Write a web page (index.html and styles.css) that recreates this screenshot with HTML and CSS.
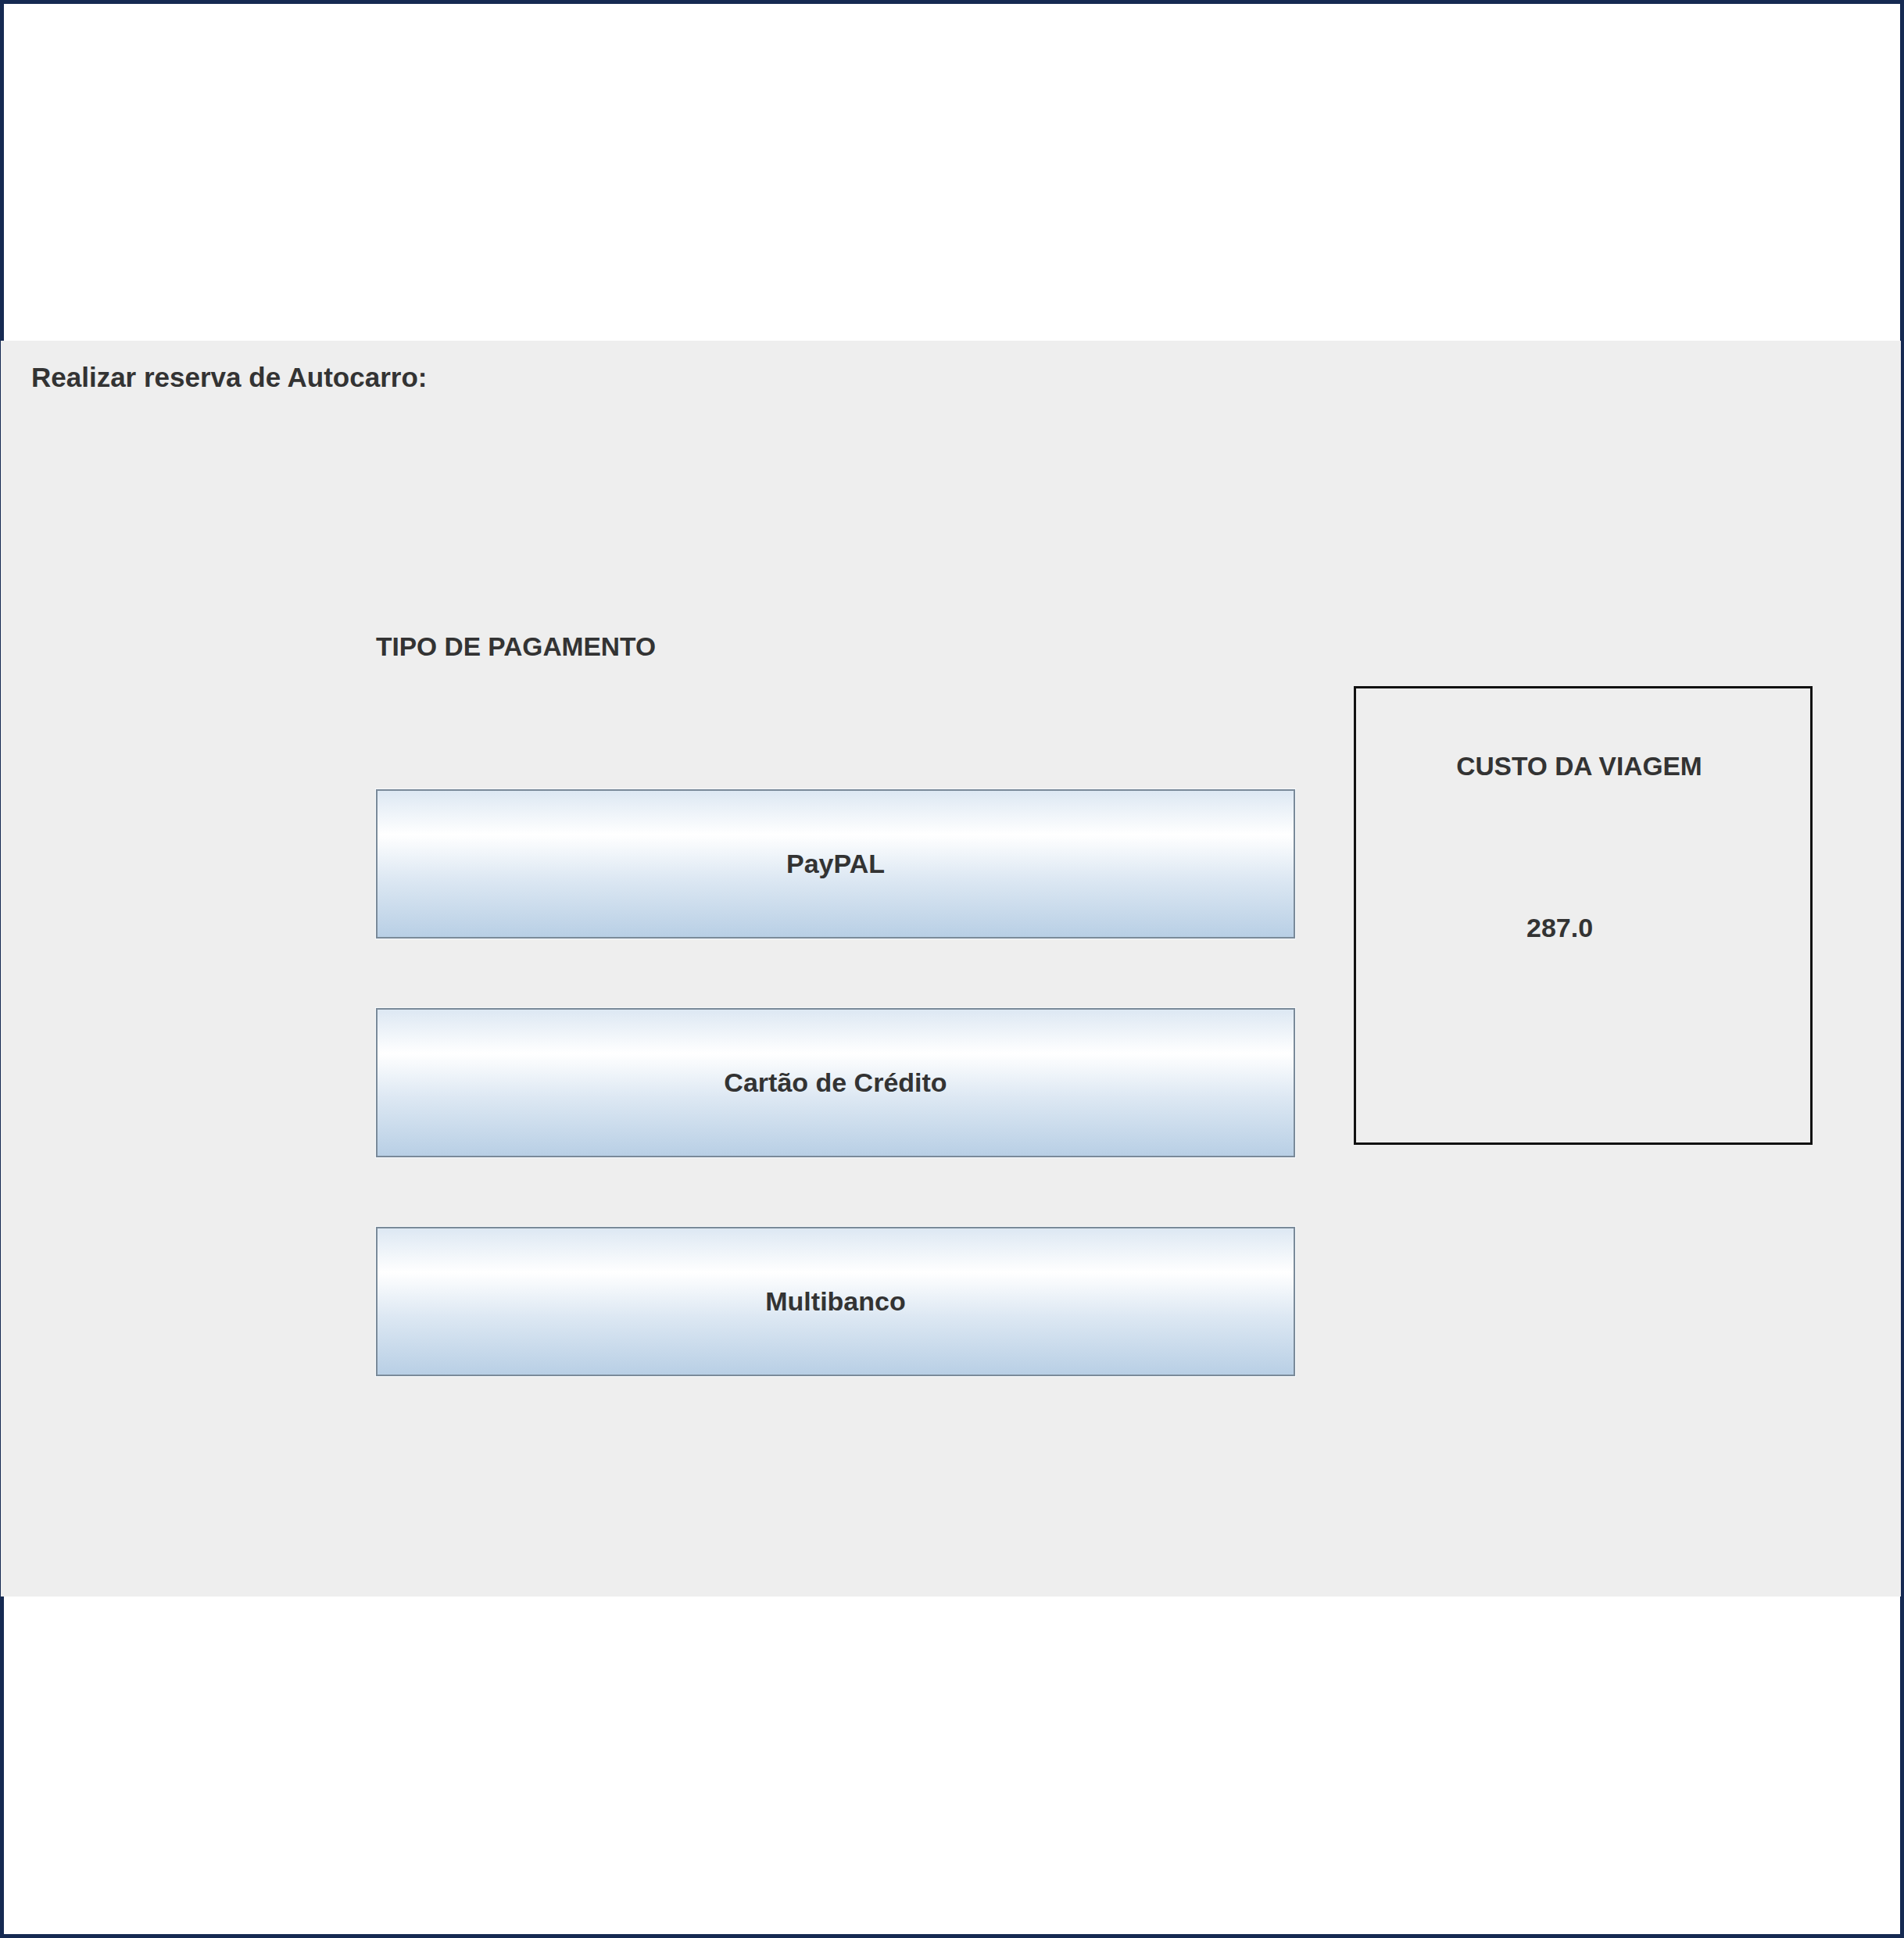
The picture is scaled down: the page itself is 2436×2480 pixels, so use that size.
FILE: index.html
```html
<!DOCTYPE html>
<html lang="pt">
<head>
<meta charset="utf-8">
<title>Realizar reserva de Autocarro</title>
<link rel="stylesheet" href="styles.css">
</head>
<body>
<div class="frame">
  <div class="panel">
    <div class="title">Realizar reserva de Autocarro:</div>
    <div class="content">
      <div class="pay-col">
        <div class="label">TIPO DE PAGAMENTO</div>
        <div class="buttons">
          <button class="btn">PayPAL</button>
          <button class="btn">Cartão de Crédito</button>
          <button class="btn">Multibanco</button>
        </div>
      </div>
      <div class="cost-box">
        <div class="cost-title">CUSTO DA VIAGEM</div>
        <div class="cost-value">287.0</div>
      </div>
    </div>
  </div>
</div>
</body>
</html>
```
FILE: styles.css
```css
html, body {
  margin: 0;
  padding: 0;
  background: #ffffff;
}
.frame {
  box-sizing: border-box;
  width: 2436px;
  height: 2480px;
  border: 5px solid #162a52;
  background: #ffffff;
  font-family: "Liberation Sans", Arial, sans-serif;
  font-weight: bold;
  color: #333333;
}
.panel {
  margin: 431px -1px 0 -4px;
  height: 1607px;
  background: #eeeeee;
}
.title {
  padding: 30px 0 0 39px;
  font-size: 35px;
  line-height: 34px;
}
.content {
  display: flex;
  align-items: flex-start;
  margin-left: 480px;
  gap: 75px;
}
.pay-col {
  width: 1176px;
  margin-top: 311px;
}
.label {
  font-size: 33.5px;
  line-height: 34px;
}
.buttons {
  display: flex;
  flex-direction: column;
  gap: 89px;
  margin-top: 165px;
}
.btn {
  box-sizing: border-box;
  width: 1176px;
  height: 191px;
  border: 2px solid #7a8a99;
  padding: 0;
  margin: 0;
  background: linear-gradient(to bottom, #dde8f3 0%, #ffffff 30%, #dde8f3 60%, #b8cfe5 100%);
  font-family: "Liberation Sans", Arial, sans-serif;
  font-weight: bold;
  font-size: 34px;
  color: #333333;
  box-shadow: 0 0 0 1px #f6f9fc;
}
.cost-box {
  box-sizing: border-box;
  width: 587px;
  height: 587px;
  margin-top: 378px;
  border: 3px solid #111111;
  font-size: 33.5px;
  line-height: 34px;
}
.cost-title {
  margin-top: 83px;
  padding-right: 10px;
  text-align: center;
}
.cost-value {
  margin-top: 172px;
  padding-left: 218px;
  font-size: 34px;
}
```
